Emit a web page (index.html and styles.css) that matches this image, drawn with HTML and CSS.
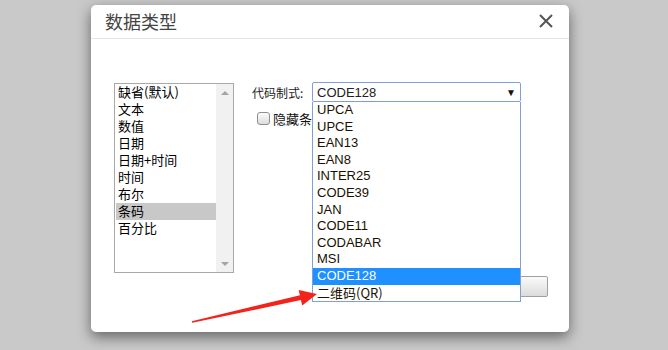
FILE: index.html
```html
<!DOCTYPE html>
<html lang="zh-CN">
<head>
    <meta charset="UTF-8">
    <title>数据类型</title>
    <link rel="stylesheet" href="styles.css">
</head>
<body>
    <div class="modal">
        <div class="modal-header">
            <h4 class="modal-title">数据类型</h4>
            <button class="close" type="button" aria-label="关闭">
                <svg width="14" height="14" viewBox="0 0 14 14"><path d="M1 1L13 13M13 1L1 13" stroke="#555" stroke-width="2" fill="none"/></svg>
            </button>
        </div>

        <div class="modal-body">
            <!-- type list -->
            <div class="listbox">
                <ul class="list-items">
                    <li>缺省(默认)</li>
                    <li>文本</li>
                    <li>数值</li>
                    <li>日期</li>
                    <li>日期+时间</li>
                    <li>时间</li>
                    <li>布尔</li>
                    <li class="selected">条码</li>
                    <li>百分比</li>
                </ul>
                <div class="scrollbar">
                    <span class="arrow-up"></span>
                    <span class="arrow-down"></span>
                </div>
            </div>

            <!-- barcode options -->
            <div class="options">
                <div class="field-row">
                    <label class="field-label">代码制式:</label>
                    <div class="select-wrap">
                        <div class="select">
                            <span>CODE128</span>
                            <span class="caret">▼</span>
                        </div>
                        <ul class="dropdown">
                            <li>UPCA</li>
                            <li>UPCE</li>
                            <li>EAN13</li>
                            <li>EAN8</li>
                            <li>INTER25</li>
                            <li>CODE39</li>
                            <li>JAN</li>
                            <li>CODE11</li>
                            <li>CODABAR</li>
                            <li>MSI</li>
                            <li class="active">CODE128</li>
                            <li class="zh">二维码(QR)</li>
                        </ul>
                    </div>
                </div>
                <div class="check-row">
                    <span class="checkbox"></span>
                    <span class="check-label">隐藏条码文字</span>
                </div>
                <div class="btn-row">
                    <button class="btn" type="button">确定</button>
                </div>
            </div>
        </div>
    </div>

    <!-- red annotation arrow -->
    <svg class="annotation" width="668" height="350" viewBox="0 0 668 350">
        <polygon fill="#f2231b" points="191.8,321.2 192.2,322.8 300.9,300.1 302.2,305.5 317,294 298.6,289.9 299.9,295.3"/>
    </svg>
</body>
</html>
```

FILE: styles.css
```css
* {
    margin: 0;
    padding: 0;
    box-sizing: border-box;
}
body {
    background: #c9c9c9;
    font-family: "Liberation Sans", Arial, "Noto Sans CJK SC", sans-serif;
    width: 668px;
    height: 350px;
    overflow: hidden;
    position: relative;
}
.modal {
    margin: 5px 0 0 91px;
    width: 478px;
    height: 327px;
    background: #fff;
    border-radius: 5px;
    box-shadow: 0 5px 14px rgba(0, 0, 0, 0.5);
}
.modal-header {
    height: 34px;
    border-bottom: 1px solid #e5e5e5;
    display: flex;
    align-items: center;
    justify-content: space-between;
    padding: 0 16px 0 14px;
}
.modal-title {
    font-family: "Noto Sans CJK SC", sans-serif;
    font-size: 18px;
    font-weight: 400;
    color: #444;
    line-height: 1;
    margin-top: -2px;
}
.close {
    background: none;
    border: none;
    width: 14px;
    height: 14px;
    display: flex;
    margin-top: -2px;
}
.modal-body {
    display: flex;
    padding: 44px 0 0 23px;
}
.listbox {
    width: 120px;
    height: 190px;
    border: 1px solid #a9a9a9;
    display: flex;
    font-family: "Noto Sans CJK SC", sans-serif;
    font-size: 13px;
    color: #000;
}
.list-items {
    list-style: none;
    flex: 1;
    padding-left: 1px;
}
.list-items li {
    height: 17px;
    line-height: 15px;
    padding-left: 2px;
    white-space: nowrap;
}
.list-items li.selected {
    background: #c8c8c8;
}
.scrollbar {
    width: 17px;
    background: #f1f1f1;
    display: flex;
    flex-direction: column;
    justify-content: space-between;
    align-items: center;
    padding: 7px 0 6px;
}
.arrow-up,
.arrow-down {
    width: 0;
    height: 0;
    border-left: 4px solid transparent;
    border-right: 4px solid transparent;
}
.arrow-up {
    border-bottom: 4px solid #a3a3a3;
}
.arrow-down {
    border-top: 4px solid #a3a3a3;
}
.options {
    margin-left: 18px;
    width: 296px;
    display: flex;
    flex-direction: column;
}
.field-row {
    display: flex;
    align-items: center;
    margin-top: -1px;
}
.field-label {
    font-family: "Noto Sans CJK SC", sans-serif;
    font-size: 12px;
    color: #222;
    width: 60px;
}
.select-wrap {
    position: relative;
}
.select {
    width: 209px;
    height: 20px;
    border: 1px solid #7f9fd8;
    border-radius: 2px;
    display: flex;
    align-items: center;
    justify-content: space-between;
    padding: 0 4px;
    font-size: 13px;
    color: #222;
}
.caret {
    font-size: 10px;
    color: #111;
}
.dropdown {
    position: absolute;
    top: 20px;
    left: 0;
    width: 209px;
    list-style: none;
    background: #fff;
    border: 1px solid #7f9fd8;
    border-top: none;
    font-size: 13px;
    color: #1a1000;
    z-index: 2;
}
.dropdown li {
    height: 16.6px;
    line-height: 16.6px;
    padding-left: 4px;
}
.dropdown li.active {
    background: #1e90ff;
    color: #fff;
}
.dropdown li.zh {
    font-family: "Noto Sans CJK SC", sans-serif;
    font-size: 13px;
    line-height: 15px;
}
.check-row {
    display: flex;
    align-items: center;
    margin: 7px 0 0 5px;
}
.checkbox {
    width: 13px;
    height: 13px;
    border: 1px solid #8f8f8f;
    border-radius: 3px;
    background: linear-gradient(#fcfcfc, #dcdcdc);
}
.check-label {
    font-family: "Noto Sans CJK SC", sans-serif;
    font-size: 13px;
    margin-left: 3px;
    color: #111;
}
.btn-row {
    display: flex;
    justify-content: flex-end;
    margin-top: 148px;
}
.btn {
    width: 100px;
    height: 21px;
    border: 1px solid #a0a0a0;
    border-radius: 2px;
    background: linear-gradient(#fafafa, #dcdcdc);
    font-size: 13px;
}
.annotation {
    position: absolute;
    top: 0;
    left: 0;
    z-index: 3;
}
```
